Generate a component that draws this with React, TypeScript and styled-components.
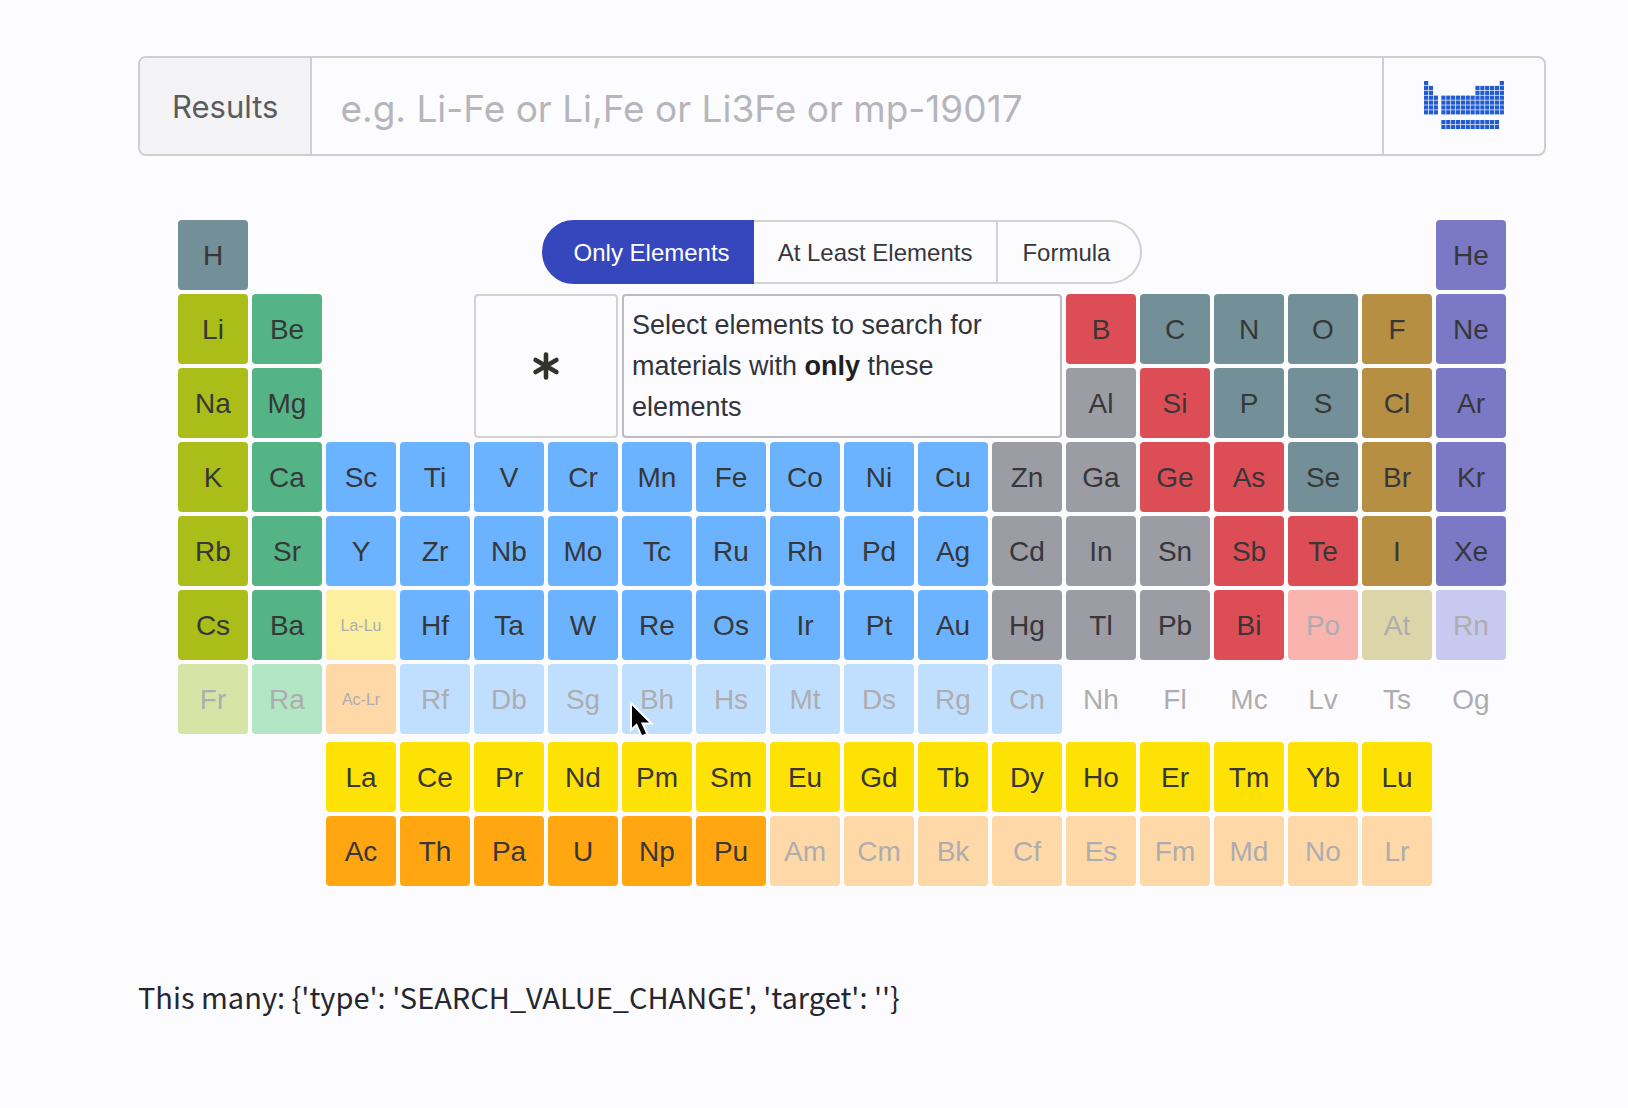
import React, { useState } from "react";
import styled, { createGlobalStyle } from "styled-components";

const sans = `"Liberation Sans", Arial, sans-serif`;
const ui = `Inter, "Liberation Sans", sans-serif`;

const GlobalStyle = createGlobalStyle`
  *, *::before, *::after { box-sizing: border-box; }
  body { margin: 0; background: #fcfcff; color: #33333a; font-family: ${sans}; }
  button, input { font: inherit; color: inherit; }
`;

type Kind =
  | "alkali" | "alkaline" | "transition" | "post" | "metalloid" | "nonmetal"
  | "halogen" | "noble" | "lanthanide" | "actinide" | "unknown";

const palette: Record<Kind, { on: string; off: string }> = {
  alkali: { on: "#abbd18", off: "#d6e5a6" },
  alkaline: { on: "#55b485", off: "#b2e6c4" },
  transition: { on: "#6bb3ff", off: "#c0dfff" },
  post: { on: "#9c9ca4", off: "#d7d7da" },
  metalloid: { on: "#dd4d55", off: "#fab4b0" },
  nonmetal: { on: "#738f97", off: "#c7d3d3" },
  halogen: { on: "#b68f42", off: "#ddd5aa" },
  noble: { on: "#7b79c6", off: "#c8c9ee" },
  lanthanide: { on: "#ffe205", off: "#fcefa0" },
  actinide: { on: "#ffa611", off: "#ffd8a8" },
  unknown: { on: "transparent", off: "transparent" },
};

const Page = styled.main`
  display: flex;
  flex-direction: column;
  padding: 56px 82px 56px 138px;
`;

const SearchBar = styled.form`
  display: flex;
  height: 100px;
  border: 2px solid #cfcfd2;
  border-radius: 8px;
  overflow: hidden;
`;

const SearchLabel = styled.label`
  display: flex;
  align-items: center;
  padding: 0 32px;
  background: #f3f3f6;
  border-right: 2px solid #cfcfd2;
  font-family: ${ui};
  font-size: 31px;
  color: #5c5c5a;
`;

const SearchInput = styled.input`
  flex: 1;
  min-width: 0;
  padding: 4px 28px 0;
  border: 0;
  outline: 0;
  background: transparent;
  font-family: ${ui};
  font-size: 37px;
  &::placeholder { color: #b6b6ba; opacity: 1; }
`;

const TableToggle = styled.button`
  display: flex;
  align-items: center;
  justify-content: center;
  width: 162px;
  padding: 0;
  border: 0;
  border-left: 2px solid #cfcfd2;
  background: transparent;
`;

const Panel = styled.section`
  margin-top: 24px;
  padding: 40px;
  border-radius: 8px;
`;

const Table = styled.div`
  position: relative;
  display: grid;
  grid-template-columns: repeat(18, minmax(0, 1fr));
  grid-template-rows: repeat(7, 70px) 0 repeat(2, 70px);
  gap: 4px;
`;

const Element = styled.button<{ $kind: Kind; $off: boolean; $row: number; $col: number; $small: boolean }>`
  grid-row: ${(p) => p.$row};
  grid-column: ${(p) => p.$col};
  padding: 2px 0 0;
  border: 0;
  border-radius: 4px;
  background: ${(p) => palette[p.$kind][p.$off ? "off" : "on"]};
  color: ${(p) => (p.$off ? "#adadb0" : "#37373a")};
  font-size: ${(p) => (p.$small ? 16 : 28)}px;
`;

const ModeSwitch = styled.div`
  grid-row: 1;
  grid-column: 4 / 16;
  justify-self: center;
  align-self: start;
  display: flex;
  height: 64px;
`;

const Mode = styled.button<{ $active: boolean }>`
  padding: 2px 24px 0;
  border: 2px solid ${(p) => (p.$active ? "#3647bd" : "#d2d2d6")};
  border-left-width: ${(p) => (p.$active ? 2 : 0)}px;
  background: ${(p) => (p.$active ? "#3647bd" : "transparent")};
  color: ${(p) => (p.$active ? "#ffffff" : "#37373a")};
  font-size: 24px;
  &:first-child { padding-left: 30px; padding-right: 22px; border-radius: 32px 0 0 32px; }
  &:last-child { padding-right: 30px; border-radius: 0 32px 32px 0; }
`;

const Wildcard = styled.button`
  grid-row: 2 / 4;
  grid-column: 5 / 7;
  display: flex;
  align-items: center;
  justify-content: center;
  padding: 0;
  border: 2px solid #d2d2d0;
  border-radius: 4px;
  background: transparent;
`;

const Hint = styled.p`
  grid-row: 2 / 4;
  grid-column: 7 / 13;
  margin: 0;
  padding: 9px 40px 8px 8px;
  border: 2px solid #bcbcc0;
  border-radius: 4px;
  font-size: 27px;
  line-height: 41px;
  strong { color: #1f1f22; }
`;

const Output = styled.p`
  margin: 46px 0 0;
  font-family: "Noto Sans CJK SC", "Noto Sans", sans-serif;
  font-size: 29px;
  line-height: 48px;
  color: #26262f;
`;

const Pointer = styled.svg`
  position: absolute;
  left: 34%;
  top: 482px;
  pointer-events: none;
`;

const rows: [number, number, string][] = [
  [1, 1, "H"], [1, 18, "He"],
  [2, 1, "Li Be"], [2, 13, "B C N O F Ne"],
  [3, 1, "Na Mg"], [3, 13, "Al Si P S Cl Ar"],
  [4, 1, "K Ca Sc Ti V Cr Mn Fe Co Ni Cu Zn Ga Ge As Se Br Kr"],
  [5, 1, "Rb Sr Y Zr Nb Mo Tc Ru Rh Pd Ag Cd In Sn Sb Te I Xe"],
  [6, 1, "Cs Ba La-Lu Hf Ta W Re Os Ir Pt Au Hg Tl Pb Bi Po At Rn"],
  [7, 1, "Fr Ra Ac-Lr Rf Db Sg Bh Hs Mt Ds Rg Cn Nh Fl Mc Lv Ts Og"],
  [9, 3, "La Ce Pr Nd Pm Sm Eu Gd Tb Dy Ho Er Tm Yb Lu"],
  [10, 3, "Ac Th Pa U Np Pu Am Cm Bk Cf Es Fm Md No Lr"],
];

const metalloids = "B Si Ge As Sb Te Bi Po".split(" ");
const nonmetals = "H C N O P S Se".split(" ");

function kindOf(symbol: string, row: number, col: number): Kind {
  if (nonmetals.includes(symbol)) return "nonmetal";
  if (metalloids.includes(symbol)) return "metalloid";
  if (row === 9 || symbol === "La-Lu") return "lanthanide";
  if (row === 10 || symbol === "Ac-Lr") return "actinide";
  if (row === 7 && col > 12) return "unknown";
  if (col === 1) return "alkali";
  if (col === 2) return "alkaline";
  if (col === 17) return "halogen";
  if (col === 18) return "noble";
  if (col < 12 || symbol === "Cn") return "transition";
  return "post";
}

const elements = rows.flatMap(([row, start, symbols]) =>
  symbols.split(" ").map((symbol, i) => {
    const col = start + i;
    const off = row === 7 || (row === 6 && (col === 3 || col > 15)) || (row === 10 && col > 8);
    return { symbol, row, col, off, kind: kindOf(symbol, row, col) };
  })
);

function TableIcon() {
  const cells: [number, number][] = [];
  for (let r = 0; r < 7; r++) {
    for (let c = 0; c < 16; c++) {
      const shown = r === 0 ? c === 0 || c === 15 : r < 3 ? c < 2 || c > 9 : true;
      if (shown) cells.push([c * 4.87 + (c > 2 ? 2.7 : 0), r * 4.87]);
    }
  }
  for (let r = 0; r < 2; r++) {
    for (let c = 3; c < 15; c++) cells.push([c * 4.87 + 2.7, 39 + r * 4.87]);
  }
  return (
    <svg width="80" height="50" viewBox="0 0 80 50" fill="#235bd2" aria-hidden="true">
      {cells.map(([x, y]) => (
        <rect key={`${x}-${y}`} x={x} y={y} width="4.2" height="4.2" />
      ))}
    </svg>
  );
}

const modes = ["Only Elements", "At Least Elements", "Formula"];

export default function App() {
  const [mode, setMode] = useState(modes[0]);
  const [query, setQuery] = useState("");
  return (
    <Page>
      <GlobalStyle />
      <SearchBar onSubmit={(e) => e.preventDefault()}>
        <SearchLabel htmlFor="query">Results</SearchLabel>
        <SearchInput
          id="query"
          value={query}
          onChange={(e) => setQuery(e.target.value)}
          placeholder="e.g. Li-Fe or Li,Fe or Li3Fe or mp-19017"
        />
        <TableToggle type="button" aria-label="Toggle periodic table">
          <TableIcon />
        </TableToggle>
      </SearchBar>
      <Panel>
        <Table>
          <ModeSwitch>
            {modes.map((m) => (
              <Mode key={m} type="button" $active={m === mode} onClick={() => setMode(m)}>
                {m}
              </Mode>
            ))}
          </ModeSwitch>
          <Wildcard type="button" aria-label="Any element">
            <svg width="28" height="28" viewBox="0 0 28 28" stroke="#33332e" strokeWidth="4.6" strokeLinecap="round" aria-hidden="true">
              <path d="M14 2.5v23M3.6 8l20.8 12M24.4 8L3.6 20" />
            </svg>
          </Wildcard>
          <Hint>
            Select elements to search for materials with <strong>only</strong> these elements
          </Hint>
          {elements.map((e) => (
            <Element
              key={e.symbol}
              type="button"
              $kind={e.kind}
              $off={e.off}
              $row={e.row}
              $col={e.col}
              $small={e.symbol.includes("-")}
            >
              {e.symbol}
            </Element>
          ))}
          <Pointer width="26" height="38" viewBox="0 0 26 38" aria-hidden="true">
            <path d="M1 1V28l5.500-5 5 11.500 6-2.500-5-10.500h9z" fill="#000" stroke="#fff" strokeWidth="2" />
          </Pointer>
        </Table>
      </Panel>
      <Output>{"This many: {'type': 'SEARCH_VALUE_CHANGE', 'target': ''}"}</Output>
    </Page>
  );
}
